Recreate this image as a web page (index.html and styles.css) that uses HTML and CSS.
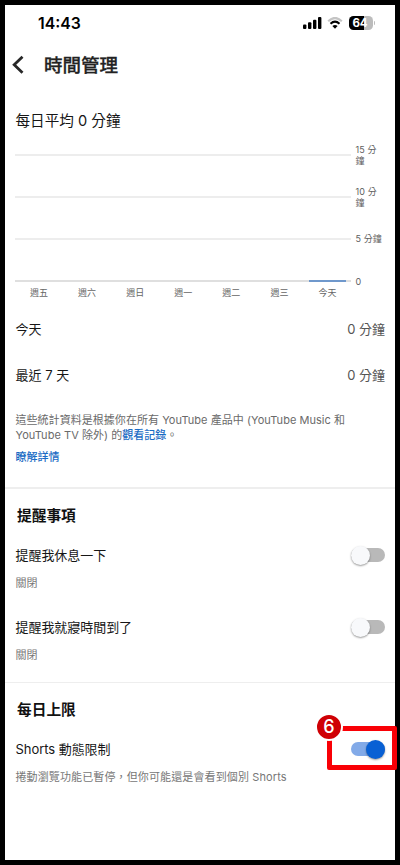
FILE: index.html
```html
<!DOCTYPE html>
<html lang="zh-Hant">
<head>
<meta charset="utf-8">
<meta name="viewport" content="width=device-width, initial-scale=1">
<title>時間管理</title>
<link rel="stylesheet" href="styles.css">
</head>
<body>
<div class="phone">
  <div class="status">
    <span class="clock">14:43</span>
    <div class="indicators">
      <svg class="signal" width="19" height="12" viewBox="0 0 19 12"><rect x="0" y="7.6" width="3.4" height="4.4" rx="1"/><rect x="5" y="5.2" width="3.4" height="6.8" rx="1"/><rect x="10" y="2.7" width="3.4" height="9.3" rx="1"/><rect x="15" y="0" width="3.4" height="12" rx="1"/></svg>
      <svg class="wifi" width="16" height="12" viewBox="0 0 16 12" fill="none"><path d="M1.2 4.2Q8-2.2 14.8 4.2" stroke="#c4c4c4" stroke-width="2.2"/><path d="M3.5 6.7Q8 2.6 12.5 6.7" stroke="#000" stroke-width="2.1"/><path d="M5.4 9.1Q8 7 10.6 9.1L8 11.8Z" fill="#000"/></svg>
      <div class="battery"><span>64</span></div>
      <span class="cap"></span>
    </div>
  </div>
  <header class="topbar">
    <svg width="12" height="20" viewBox="0 0 12 20" fill="none" stroke="#282828" stroke-width="2.8"><path d="M10.5 1.8L2.2 9.8L10.5 17.8"/></svg>
    <h1>時間管理</h1>
  </header>
  <main>
    <div class="average">每日平均 0 分鐘</div>
    <div class="chart">
      <div class="band"><i></i><span>15 分<br>鐘</span></div>
      <div class="band"><i></i><span>10 分<br>鐘</span></div>
      <div class="band"><i></i><span>5 分鐘</span></div>
      <div class="band base"><i><b></b></i><span>0</span></div>
    </div>
    <div class="days"><span>週五</span><span>週六</span><span>週日</span><span>週一</span><span>週二</span><span>週三</span><span>今天</span></div>
    <div class="stat"><span>今天</span><span class="value">0 分鐘</span></div>
    <div class="stat"><span>最近 7 天</span><span class="value">0 分鐘</span></div>
    <p class="info">這些統計資料是根據你在所有 YouTube 產品中 (YouTube Music 和<br>YouTube TV 除外) 的<a>觀看記錄</a>。</p>
    <a class="more">瞭解詳情</a>
    <section class="reminders">
      <h2>提醒事項</h2>
      <div class="setting"><span class="label">提醒我休息一下</span><div class="switch"></div></div>
      <div class="note">關閉</div>
      <div class="setting second"><span class="label">提醒我就寢時間到了</span><div class="switch"></div></div>
      <div class="note">關閉</div>
    </section>
    <section class="limits">
      <h2>每日上限</h2>
      <div class="setting"><span class="label">Shorts 動態限制</span><div class="switch on"></div>
        <div class="highlight"><span class="step">6</span></div>
      </div>
      <div class="note last">捲動瀏覽功能已暫停，但你可能還是會看到個別 Shorts</div>
    </section>
  </main>
</div>
</body>
</html>
```

FILE: styles.css
```css
* { box-sizing: border-box; }
body { margin: 0; background: #000; font-family: Inter, "Noto Sans CJK TC", sans-serif; color: #161616; }
.phone { width: 400px; height: 865px; border: 5px solid #000; background: #fff; }
.status { display: flex; align-items: center; justify-content: space-between; height: 36px; padding: 0 20px 0 33px; }
.clock { padding-top: 2px; font-size: 15.8px; font-weight: 600; line-height: 20px; color: #000; }
.indicators { display: flex; align-items: center; }
.wifi { margin: 0 6px 0 5.5px; }
.battery { width: 24px; height: 14px; border-radius: 4.5px; background: linear-gradient(90deg, #000 64%, #bcbcbc 64%); color: #fff; font-size: 11.5px; font-weight: 700; line-height: 14px; letter-spacing: -.2px; text-align: center; }
.battery span { margin-left: -2px; }
.cap { width: 1.5px; height: 4px; margin-left: .5px; border-radius: 0 2px 2px 0; background: #bcbcbc; }
.topbar { display: flex; align-items: center; height: 48px; padding-left: 7px; }
.topbar h1 { margin: 0 0 0 20px; font-size: 18.5px; line-height: 24px; font-weight: 500; color: #222; -webkit-text-stroke: .3px #222; }
.average { margin-top: 21px; padding-left: 10.5px; font-size: 14.6px; line-height: 22px; }
.chart { display: grid; grid-template-rows: repeat(4, 42.2px); height: 159px; margin: 11px 0 0; padding-left: 10px; overflow: hidden; }
.band { display: flex; align-items: center; height: 23px; font-size: 9px; line-height: 11px; letter-spacing: .1px; color: #606060; }
.band i { width: 336px; height: 2px; background: #ededed; margin-right: 4.5px; }
.band.base i { background: #dfdfdf; display: flex; justify-content: flex-end; padding-right: 5px; }
.band b { width: 37px; height: 2px; background: #6f98cc; }
.days { position: relative; display: grid; grid-template-columns: repeat(7, 48.08px); width: 337px; margin: -16px 0 0 10px; font-size: 9px; line-height: 14px; text-align: center; color: #666; }
.stat { display: flex; align-items: center; justify-content: space-between; height: 46px; padding: 0 10px 0 10.5px; font-size: 13px; line-height: 20px; }
.days + .stat { margin-top: 6px; }
.value { color: #555; }
.info { margin: 15px 10px 0 10.5px; font-size: 11px; line-height: 15px; letter-spacing: .04px; color: #6a6a6a; white-space: nowrap; }
a { color: #1a6bc4; font-weight: 500; }
.more { display: block; margin: 7px 10px 0 10.5px; font-size: 11px; line-height: 15px; }
section { border-top: 2px solid #eee; }
.reminders { margin-top: 22px; height: 195px; }
.limits { border-top-width: 1px; }
h2 { margin: 16px 0 0 12px; font-size: 14.7px; line-height: 22px; font-weight: 700; color: #111; }
.setting { position: relative; display: flex; align-items: center; justify-content: space-between; height: 26px; margin-top: 15px; padding: 0 10px 0 10.5px; font-size: 13px; letter-spacing: -.05px; }
.setting.second { margin-top: 23px; }
.label { padding-bottom: 2px; }
.note { height: 16px; margin: 7px 10px 0 10.5px; font-size: 11px; line-height: 16px; color: #777; white-space: nowrap; }
.note.last { letter-spacing: .12px; }
.switch { width: 34px; height: 14px; border-radius: 7px; background: #b9b9b9; display: flex; align-items: center; }
.switch::before { content: ""; flex: none; width: 19px; height: 19px; border-radius: 50%; background: #f8f9fb; box-shadow: 0 1px 2px rgba(0,0,0,.4); }
.switch.on { background: #82aae8; justify-content: flex-end; }
.switch.on::before { background: #0860d4; }
.highlight { position: absolute; left: 322px; top: -10px; width: 70px; height: 44px; border: 5px solid #f90006; border-radius: 2px; }
.step { position: absolute; left: -17px; top: -18px; width: 28px; height: 28px; border: 2px solid #fff; border-radius: 50%; background: #cf0005; color: #fff; font-size: 18px; line-height: 24px; font-weight: 500; text-align: center; }
```
